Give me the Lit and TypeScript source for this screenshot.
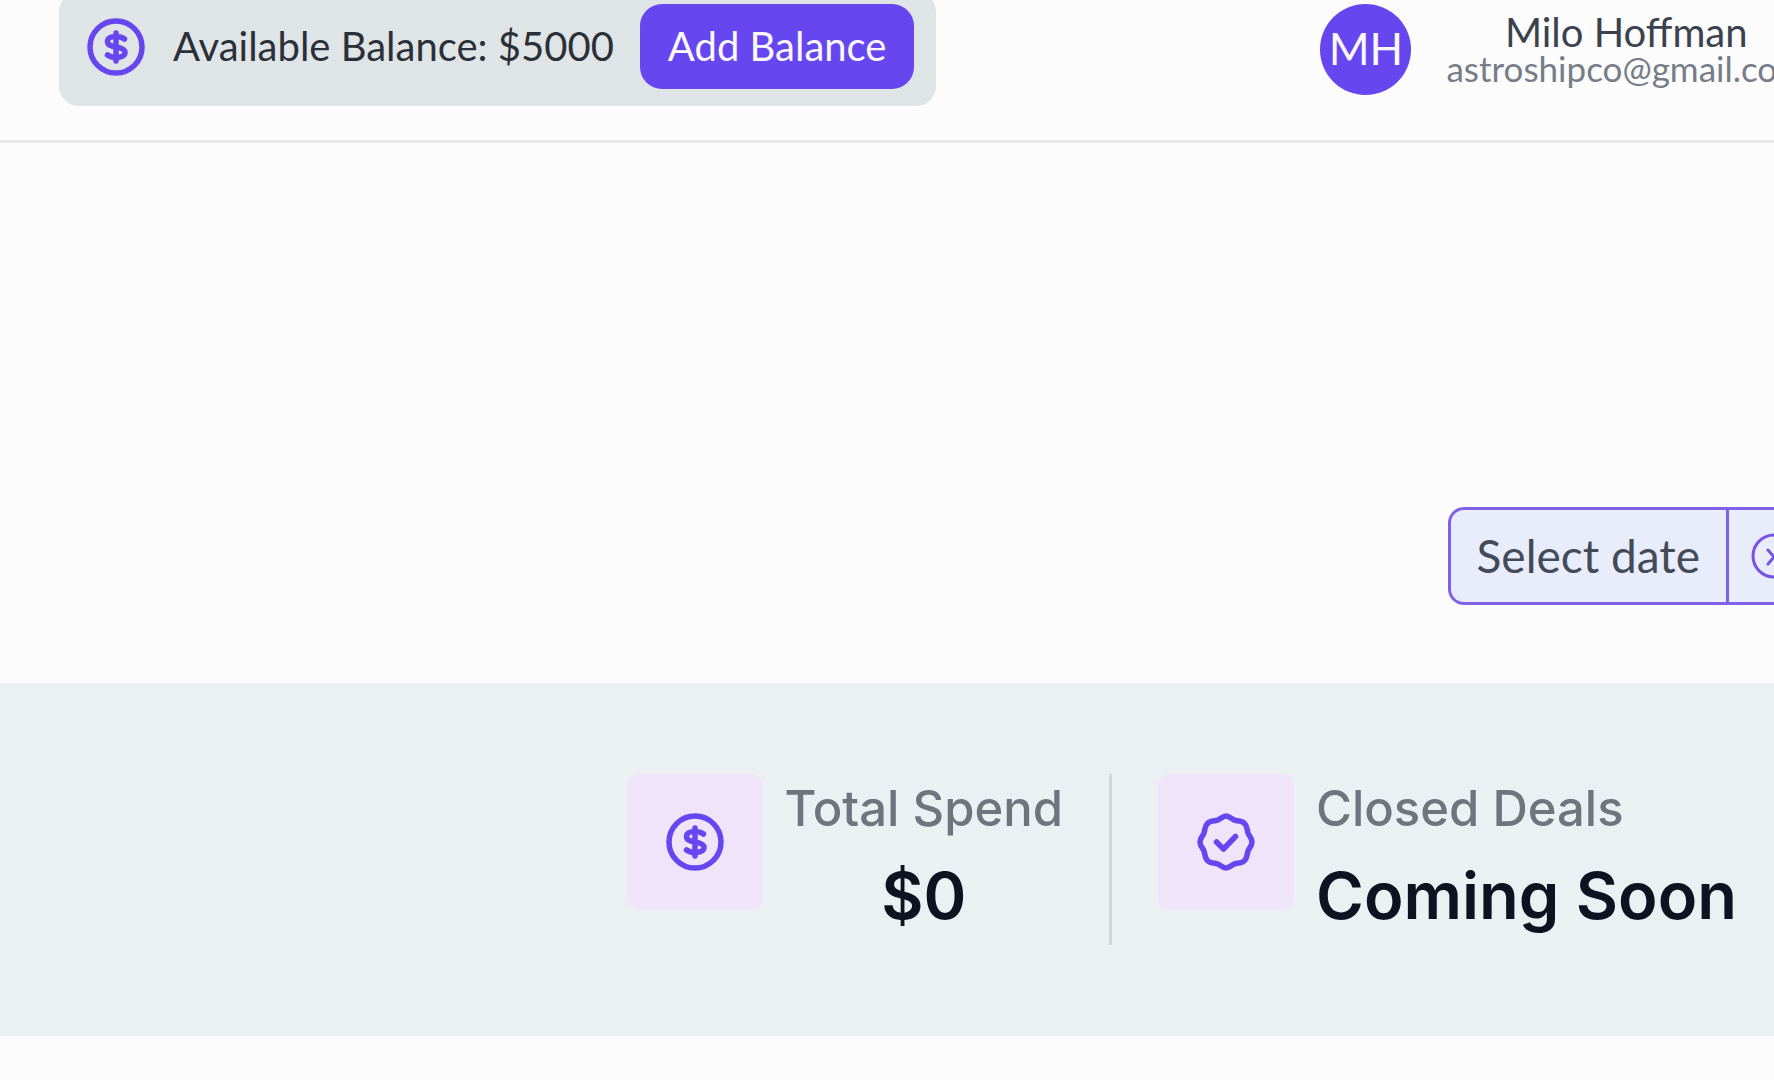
import { LitElement, html, css } from "lit";
import { customElement } from "lit/decorators.js";

const dollarIcon = html`
  <svg class="icon" viewBox="0 0 58 58" fill="none" stroke="currentColor" stroke-linecap="round" stroke-linejoin="round" aria-hidden="true">
    <circle cx="29" cy="29" r="26" stroke-width="5.500" />
    <path stroke-width="5.500" d="M37.500 21C35 19 32 18.500 28.500 18.500C23.500 18.500 20.500 20.500 20.500 23.500C20.500 27 23.500 28 29 29C35 30 38 31.500 38 34.500C38 37.500 34.500 39.500 29.500 39.500C26 39.500 23 39 20.500 37M29 15V43" />
  </svg>
`;

const badgeIcon = html`
  <svg class="icon" viewBox="0 0 58 58" fill="none" stroke="currentColor" stroke-width="5.500" stroke-linecap="round" stroke-linejoin="round" aria-hidden="true">
    <path d="M29 3C33 3 35 7 39 7.500C43 8 46 8 48 11C50.500 14 50 17 51 20C52 23 55 25 55 29C55 33 52 35 51 38C50 41 50.500 44 48 47C46 50 43 50 39 50.500C35 51 33 55 29 55C25 55 23 51 19 50.500C15 50 12 50 10 47C7.500 44 8 41 7 38C6 35 3 33 3 29C3 25 6 23 7 20C8 17 7.500 14 10 11C12 8 15 8 19 7.500C23 7 25 3 29 3Z" />
    <path d="M19.500 29L26.500 36L38.500 23.500" />
  </svg>
`;

@customElement("app-root")
export class AppRoot extends LitElement {
  static styles = css`
    :host {
      display: block;
      min-height: 100vh;
      overflow: hidden;
      background: #fcfcfc;
      font-family: Lato, "Open Sans", sans-serif;
    }
    * { box-sizing: border-box; }
    button { font: inherit; margin: 0; border: 0; white-space: nowrap; }
    .icon { display: block; flex: none; width: 58px; height: 58px; color: #6646ee; }
    .header {
      display: flex;
      justify-content: space-between;
      align-items: flex-start;
      margin-top: -8px;
      margin-right: -56px;
      padding: 0 24px 34px 59px;
      border-bottom: 3px solid #e8e9ea;
      white-space: nowrap;
    }
    .balance {
      display: flex;
      align-items: center;
      padding: 12px 22px 17px 28px;
      border-radius: 20px;
      background: #dfe4e7;
      color: #2b3038;
      font-size: 40px;
      line-height: 48px;
    }
    .amount { padding: 0 26px 2px 28px; }
    .add {
      height: 85px;
      padding: 0 28px 2px;
      border-radius: 22px;
      background: #6646ee;
      color: #fbf8ff;
    }
    .account { display: flex; align-items: center; gap: 35px; padding-top: 12px; }
    .avatar {
      display: grid;
      place-items: center;
      width: 91px;
      height: 91px;
      padding-bottom: 4px;
      border-radius: 50%;
      background: #6646ee;
      color: #fbf8ff;
      font-size: 44px;
    }
    .who { padding-bottom: 2px; text-align: center; }
    .name { font-size: 40px; line-height: 38px; color: #3b424e; }
    .email { font-size: 35px; line-height: 34px; color: #777d88; }
    .filters {
      display: flex;
      justify-content: flex-end;
      margin-right: -48px;
      padding: 364px 0 78px;
    }
    .picker {
      display: flex;
      height: 98px;
      border: 3px solid #8161e8;
      border-radius: 16px;
      background: #e9edfb;
      overflow: hidden;
    }
    .date { padding: 0 26px 2px; background: none; color: #434b58; font-size: 46px; }
    .clear { padding: 0 22px; border-left: 3px solid #8161e8; background: none; color: #7653e6; }
    .clear svg { display: block; width: 46px; height: 46px; }
    .stats {
      display: flex;
      justify-content: flex-end;
      padding: 91px 37px 91px 24px;
      background: #ebf0f3;
      font-family: Inter, sans-serif;
      white-space: nowrap;
    }
    .stat { display: flex; gap: 22px; height: 171px; }
    .stat + .stat { margin-left: 46px; padding-left: 46px; border-left: 3px solid #d3d7da; }
    .tile {
      display: grid;
      place-items: center;
      width: 136px;
      height: 136px;
      border-radius: 12px;
      background: #f0e4fb;
    }
    .label { margin: 0; font-size: 49px; line-height: 70px; font-weight: 500; color: #70747f; }
    .value { margin: 0; font-size: 65px; line-height: 104px; font-weight: 600; color: #0d1320; }
    .centered { text-align: center; }
  `;

  render() {
    return html`
      <header class="header">
        <div class="balance">
          ${dollarIcon}
          <span class="amount">Available Balance: $5000</span>
          <button class="add" type="button">Add Balance</button>
        </div>
        <div class="account">
          <div class="avatar">MH</div>
          <div class="who">
            <div class="name">Milo Hoffman</div>
            <div class="email">astroshipco@gmail.com</div>
          </div>
        </div>
      </header>
      <main>
        <div class="filters">
          <div class="picker">
            <button class="date" type="button">Select date</button>
            <button class="clear" type="button" aria-label="Clear date">
              <svg viewBox="0 0 46 46" fill="none" stroke="currentColor" stroke-width="3" stroke-linecap="round" aria-hidden="true">
                <circle cx="23" cy="23" r="21" />
                <path d="M17 17L29 31M29 17L17 31" />
              </svg>
            </button>
          </div>
        </div>
        <section class="stats">
          <div class="stat">
            <div class="tile">${dollarIcon}</div>
            <div class="centered">
              <p class="label">Total Spend</p>
              <p class="value">$0</p>
            </div>
          </div>
          <div class="stat">
            <div class="tile">${badgeIcon}</div>
            <div>
              <p class="label">Closed Deals</p>
              <p class="value">Coming Soon</p>
            </div>
          </div>
        </section>
      </main>
    `;
  }
}
